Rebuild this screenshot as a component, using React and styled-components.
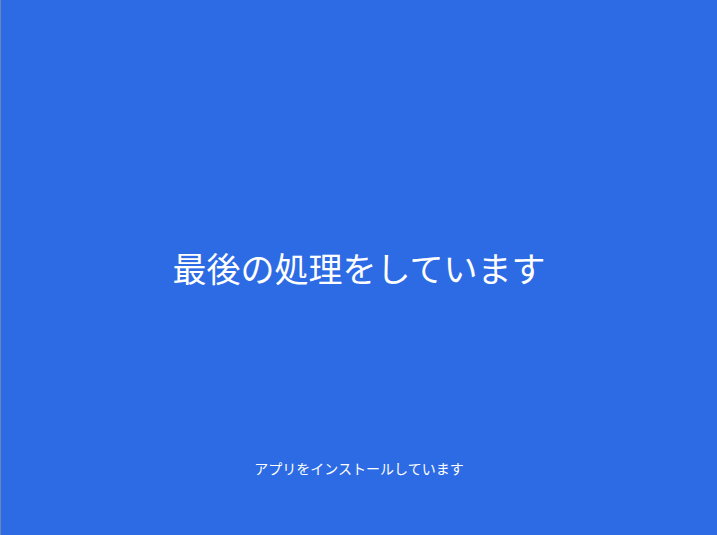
import styled, { createGlobalStyle } from 'styled-components'

const GlobalStyle = createGlobalStyle`
  html, body {
    margin: 0;
    padding: 0;
    height: 100%;
  }
  #root {
    height: 100%;
  }
`

const Screen = styled.div`
  box-sizing: border-box;
  width: 717px;
  height: 535px;
  background-color: #2d6be4;
  border-left: 1px solid #6b86b8;
  color: #ffffff;
  font-family: "Noto Sans CJK JP", "Noto Sans", sans-serif;
  display: flex;
  flex-direction: column;
  align-items: center;
  overflow: hidden;
`

const Title = styled.h1`
  margin: 243px 0 0;
  font-size: 34px;
  font-weight: 400;
  line-height: 50px;
  letter-spacing: 0;
`

const Status = styled.p`
  margin: auto 0 57px;
  font-size: 14px;
  font-weight: 400;
  line-height: 20px;
`

export default function App() {
  return (
    <>
      <GlobalStyle />
      <Screen>
        <Title>最後の処理をしています</Title>
        <Status>アプリをインストールしています</Status>
      </Screen>
    </>
  )
}
